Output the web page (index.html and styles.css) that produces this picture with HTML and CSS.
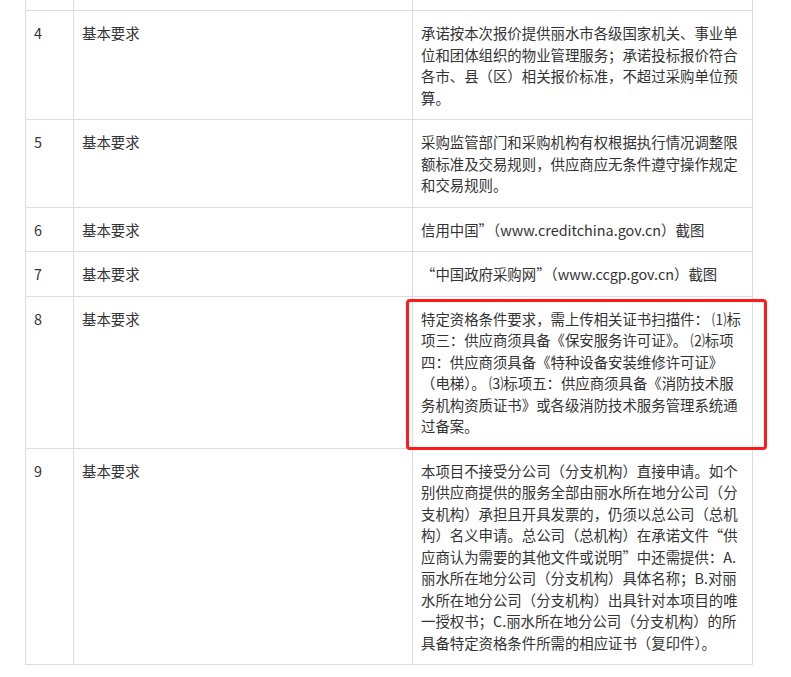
FILE: index.html
```html
<!DOCTYPE html>
<html lang="zh-CN">
<head>
<meta charset="utf-8">
<title>基本要求</title>
<link rel="stylesheet" href="styles.css">
</head>
<body>
<div class="page">
<table class="req">
  <colgroup>
    <col class="c-no">
    <col class="c-type">
    <col class="c-desc">
  </colgroup>
  <tbody>
    <tr class="stub"><td></td><td></td><td></td></tr>
    <tr>
      <td>4</td>
      <td>基本要求</td>
      <td>承诺按本次报价提供丽水市各级国家机关、事业单位和团体组织的物业管理服务；承诺投标报价符合各市、县（区）相关报价标准，不超过采购单位预算。</td>
    </tr>
    <tr>
      <td>5</td>
      <td>基本要求</td>
      <td>采购监管部门和采购机构有权根据执行情况调整限额标准及交易规则，供应商应无条件遵守操作规定和交易规则。</td>
    </tr>
    <tr>
      <td>6</td>
      <td>基本要求</td>
      <td>信用中国”（www.creditchina.gov.cn）截图</td>
    </tr>
    <tr>
      <td>7</td>
      <td>基本要求</td>
      <td>“中国政府采购网”（www.ccgp.gov.cn）截图</td>
    </tr>
    <tr>
      <td>8</td>
      <td>基本要求</td>
      <td class="marked">特定资格条件要求，需上传相关证书扫描件： ⑴标项三：供应商须具备《保安服务许可证》。 ⑵标项四：供应商须具备《特种设备安装维修许可证》（电梯）。 ⑶标项五：供应商须具备《消防技术服务机构资质证书》或各级消防技术服务管理系统通过备案。<span class="highlight"></span></td>
    </tr>
    <tr>
      <td>9</td>
      <td>基本要求</td>
      <td>本项目不接受分公司（分支机构）直接申请。如个别供应商提供的服务全部由丽水所在地分公司（分支机构）承担且开具发票的，仍须以总公司（总机构）名义申请。总公司（总机构）在承诺文件“供应商认为需要的其他文件或说明”中还需提供：A.丽水所在地分公司（分支机构）具体名称；B.对丽水所在地分公司（分支机构）出具针对本项目的唯一授权书；C.丽水所在地分公司（分支机构）的所具备特定资格条件所需的相应证书（复印件）。</td>
    </tr>
  </tbody>
</table>
</div>
</body>
</html>
```

FILE: styles.css
```css
html, body {
  margin: 0;
  padding: 0;
  background: #ffffff;
}

.page {
  padding: 0 0 0 25px;
  font-family: "Noto Sans CJK SC", "Noto Sans", sans-serif;
  font-size: 14.4px;
  line-height: 21.5px;
  color: #333333;
}

.req {
  border-collapse: collapse;
  table-layout: fixed;
  width: 727px;
}

.c-no { width: 48px; }
.c-type { width: 339px; }
.c-desc { width: 340px; }

.req td {
  border: 1px solid #dddddd;
  padding: 11px 8px;
  vertical-align: top;
  text-align: left;
  word-break: break-all;
}

.req tr.stub td {
  border-top: none;
  padding: 0;
  height: 10px;
}

.req td.marked {
  position: relative;
}

.highlight {
  position: absolute;
  top: 2px;
  left: -7px;
  right: -15px;
  bottom: -2px;
  border: 3px solid #ff1a1a;
  border-radius: 4px;
  pointer-events: none;
}
```
